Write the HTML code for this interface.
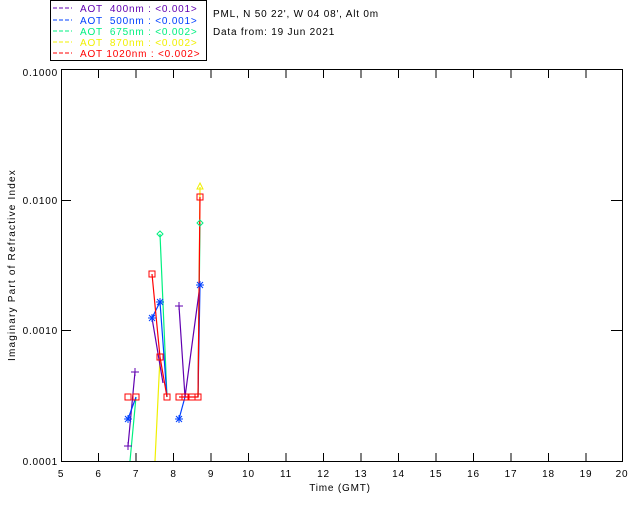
<!DOCTYPE html>
<html><head><style>
body{margin:0;background:#fff;width:640px;height:512px;overflow:hidden}
svg{display:block}
text{font-family:"Liberation Sans",sans-serif;font-size:10px;letter-spacing:0.8px}
</style></head><body>
<svg width="640" height="512" xmlns="http://www.w3.org/2000/svg">
<rect x="50.5" y="0.5" width="156" height="60" fill="none" stroke="#000"/>
<g>
<line x1="53" y1="8" x2="72" y2="8" stroke="#6000b0" stroke-dasharray="4,2"/><text x="80" y="12" fill="#6000b0" xml:space="preserve">AOT  400nm : &lt;0.001&gt;</text>
<line x1="53" y1="20" x2="72" y2="20" stroke="#0040ff" stroke-dasharray="4,2"/><text x="80" y="24" fill="#0040ff" xml:space="preserve">AOT  500nm : &lt;0.001&gt;</text>
<line x1="53" y1="31" x2="72" y2="31" stroke="#00f080" stroke-dasharray="4,2"/><text x="80" y="35" fill="#00f080" xml:space="preserve">AOT  675nm : &lt;0.002&gt;</text>
<line x1="53" y1="42" x2="72" y2="42" stroke="#f0f000" stroke-dasharray="4,2"/><text x="80" y="46" fill="#f0f000" xml:space="preserve">AOT  870nm : &lt;0.002&gt;</text>
<line x1="53" y1="53" x2="72" y2="53" stroke="#ff0000" stroke-dasharray="4,2"/><text x="80" y="57" fill="#ff0000" xml:space="preserve">AOT 1020nm : &lt;0.002&gt;</text>
</g>
<text x="213" y="17">PML, N 50 22', W 04 08', Alt 0m</text>
<text x="213" y="35">Data from: 19 Jun 2021</text>
<rect x="61.5" y="69.5" width="561" height="392" fill="none" stroke="#000"/>
<g stroke="#000">
<path d="M98.5 70v8M136 70v8M173.5 70v8M211 70v8M248.5 70v8M286 70v8M323.5 70v8M361 70v8M398.5 70v8M436 70v8M473.5 70v8M511 70v8M548.5 70v8M586 70v8"/>
<path d="M98.5 461v-8M136 461v-8M173.5 461v-8M211 461v-8M248.5 461v-8M286 461v-8M323.5 461v-8M361 461v-8M398.5 461v-8M436 461v-8M473.5 461v-8M511 461v-8M548.5 461v-8M586 461v-8"/>
<path d="M62 200.5h9M62 330.5h9M622 200.5h-11M622 330.5h-11"/>
</g>
<g text-anchor="end">
<text x="58" y="76">0.1000</text><text x="58" y="204">0.0100</text><text x="58" y="334">0.0010</text><text x="58" y="465">0.0001</text>
</g>
<g text-anchor="middle">
<text x="61" y="477">5</text><text x="98.5" y="477">6</text><text x="136" y="477">7</text><text x="173.5" y="477">8</text><text x="211" y="477">9</text><text x="248.5" y="477">10</text><text x="286" y="477">11</text><text x="323.5" y="477">12</text><text x="361" y="477">13</text><text x="398.5" y="477">14</text><text x="436" y="477">15</text><text x="473.5" y="477">16</text><text x="511" y="477">17</text><text x="548.5" y="477">18</text><text x="586" y="477">19</text><text x="622" y="477">20</text>
<text x="340" y="491">Time (GMT)</text>
<text transform="translate(15,265) rotate(-90)" style="letter-spacing:1.2px">Imaginary Part of Refractive Index</text>
</g>
<g fill="none" stroke-width="1.2">
<path d="M155 461L160 357M198 397L200 187" stroke="#f0f000"/>
<path d="M130 461L136 397M160 234L167 397M198 397L200 223" stroke="#00f080"/>
<path d="M128 446L135 372M152 318L163 383M179 306L185 397M185 397L200 285" stroke="#6000b0"/>
<path d="M128 419L136 397M152 318L160 302L167 397M179 419L185 397M198 397L200 285" stroke="#0040ff"/>
<path d="M152 274L160 357L167 397M179 397H198L200 197" stroke="#ff0000"/>
</g>
<g stroke="#6000b0"><path d="M124 446h8M128 442v8M131 372h8M135 368v8M175 306h8M179 302v8"/></g>
<g stroke="#0040ff"><path d="M124 419h8M128 415v8M125 416l6 6M131 416l-6 6M148 318h8M152 314v8M149 315l6 6M155 315l-6 6M156 302h8M160 298v8M157 299l6 6M163 299l-6 6M175 419h8M179 415v8M176 416l6 6M182 416l-6 6M196 285h8M200 281v8M197 282l6 6M203 282l-6 6"/></g>
<g fill="none" stroke="#00f080"><path d="M160 231l3 3-3 3-3-3zM200 220l3 3-3 3-3-3z"/></g>
<path d="M200 183l3 6h-6z" fill="none" stroke="#f0f000"/>
<g fill="none" stroke="#ff0000"><rect x="125" y="394" width="6" height="6"/><rect x="133" y="394" width="6" height="6"/><rect x="149" y="271" width="6" height="6"/><rect x="157" y="354" width="6" height="6"/><rect x="164" y="394" width="6" height="6"/><rect x="176" y="394" width="6" height="6"/><rect x="182" y="394" width="6" height="6"/><rect x="189" y="394" width="6" height="6"/><rect x="195" y="394" width="6" height="6"/><rect x="197" y="194" width="6" height="6"/></g>
</svg>
</body></html>
